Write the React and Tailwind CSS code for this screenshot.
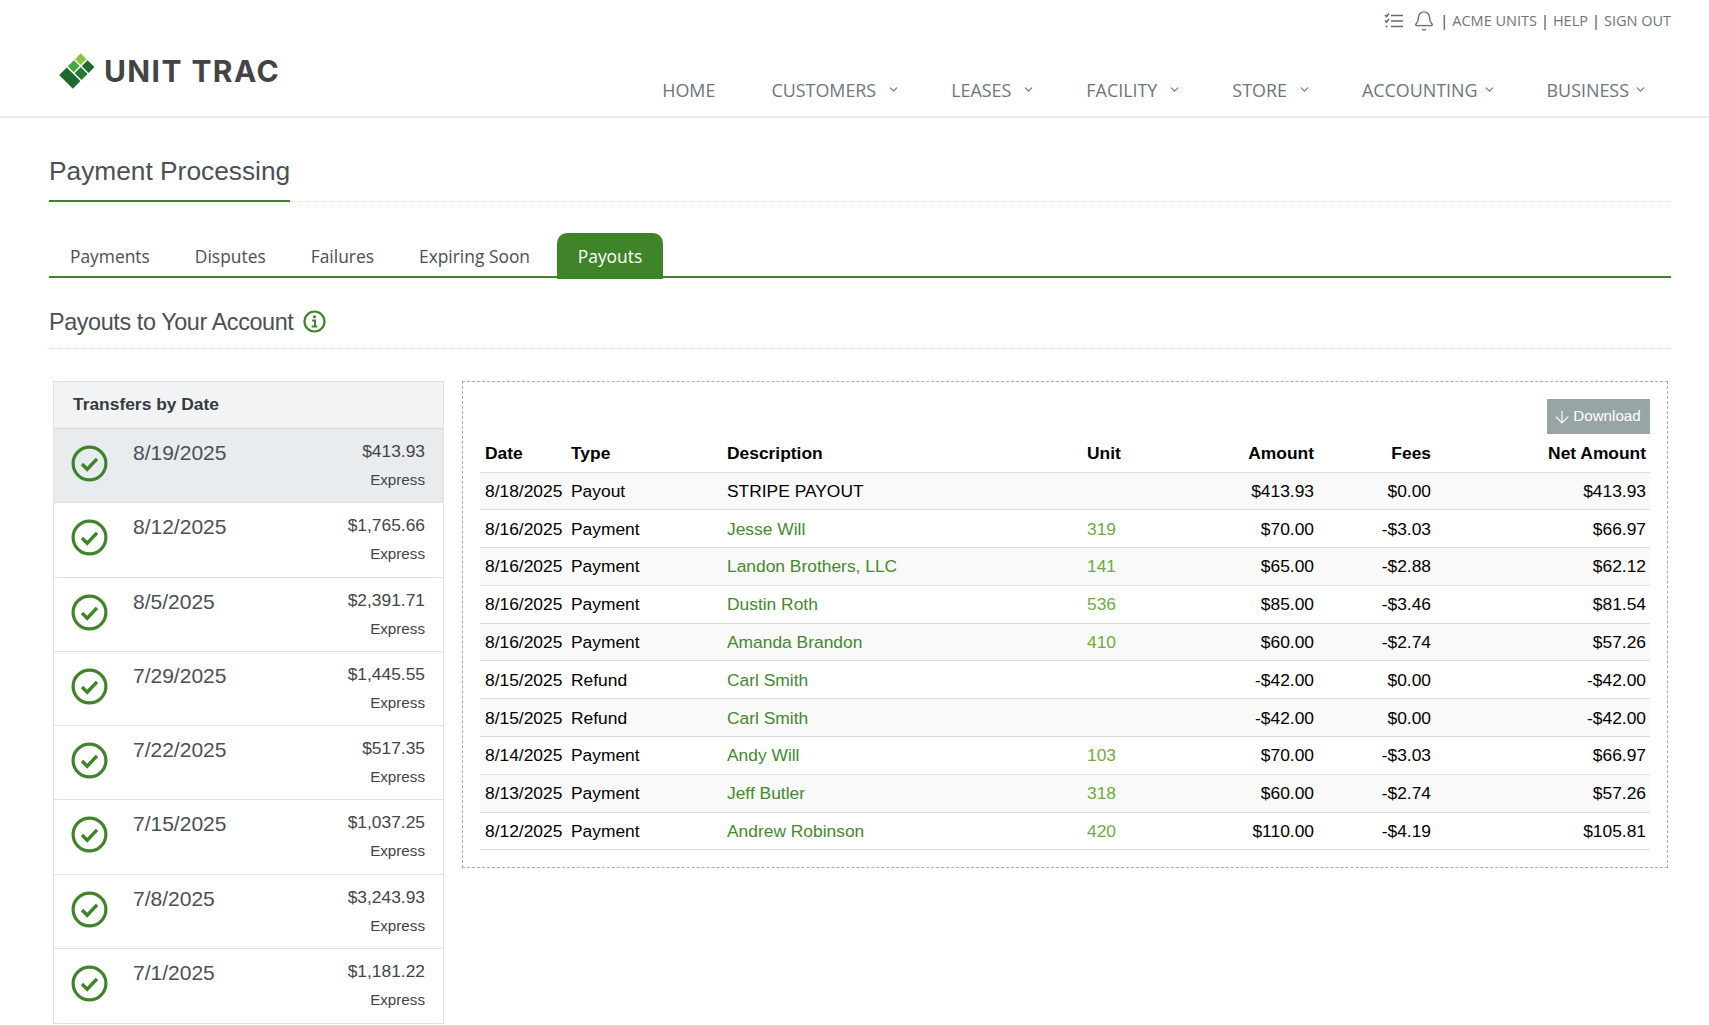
import React from 'react';
import { Bell, ChevronDown, ArrowDown } from 'lucide-react';

const navItems = [
  { label: 'HOME', className: 'ml-0' },
  { label: 'CUSTOMERS', className: 'ml-[56px]', caret: 'ml-[11px]' },
  { label: 'LEASES', className: 'ml-[51px]', caret: 'ml-[11px]' },
  { label: 'FACILITY', className: 'ml-[51px]', caret: 'ml-[11px]' },
  { label: 'STORE', className: 'ml-[51px]', caret: 'ml-[11px]' },
  { label: 'ACCOUNTING', className: 'ml-[51px]', caret: 'ml-[5px]' },
  { label: 'BUSINESS', className: 'ml-[51px]', caret: 'ml-[5px]' },
];

const tabs = ['Payments', 'Disputes', 'Failures', 'Expiring Soon'];

const transfers = [
  { date: '8/19/2025', amount: '$413.93', active: true },
  { date: '8/12/2025', amount: '$1,765.66' },
  { date: '8/5/2025', amount: '$2,391.71' },
  { date: '7/29/2025', amount: '$1,445.55' },
  { date: '7/22/2025', amount: '$517.35' },
  { date: '7/15/2025', amount: '$1,037.25' },
  { date: '7/8/2025', amount: '$3,243.93' },
  { date: '7/1/2025', amount: '$1,181.22' },
];

const rows = [
  ['8/18/2025', 'Payout', 'STRIPE PAYOUT', '', '$413.93', '$0.00', '$413.93'],
  ['8/16/2025', 'Payment', 'Jesse Will', '319', '$70.00', '-$3.03', '$66.97'],
  ['8/16/2025', 'Payment', 'Landon Brothers, LLC', '141', '$65.00', '-$2.88', '$62.12'],
  ['8/16/2025', 'Payment', 'Dustin Roth', '536', '$85.00', '-$3.46', '$81.54'],
  ['8/16/2025', 'Payment', 'Amanda Brandon', '410', '$60.00', '-$2.74', '$57.26'],
  ['8/15/2025', 'Refund', 'Carl Smith', '', '-$42.00', '$0.00', '-$42.00'],
  ['8/15/2025', 'Refund', 'Carl Smith', '', '-$42.00', '$0.00', '-$42.00'],
  ['8/14/2025', 'Payment', 'Andy Will', '103', '$70.00', '-$3.03', '$66.97'],
  ['8/13/2025', 'Payment', 'Jeff Butler', '318', '$60.00', '-$2.74', '$57.26'],
  ['8/12/2025', 'Payment', 'Andrew Robinson', '420', '$110.00', '-$4.19', '$105.81'],
];

const Logo = () => (
  <svg width="36" height="36" viewBox="0 0 104 105" className="shrink-0">
    <polygon points="63,1 80,18 63,35 46,18" fill="#8cc63f" />
    <polygon points="43,21 60,38 42,56 25,39" fill="#4fa445" />
    <polygon points="83,21 103,41 86,58 66,38" fill="#1e6b32" />
    <polygon points="63,41 83,61 65,79 45,59" fill="#2a7a35" />
    <polygon points="22,42 62,82 40,104 0,64" fill="#1d6a2e" />
  </svg>
);

const CheckCircle = () => (
  <svg width="37" height="37" viewBox="0 0 37 37" fill="none" className="shrink-0">
    <circle cx="18.5" cy="18.5" r="16.4" stroke="#3f8428" strokeWidth="3.2" />
    <path d="M11 19l5.2 5.2 9.8-10.4" stroke="#3f8428" strokeWidth="3.4" />
  </svg>
);

const TaskList = () => (
  <svg width="20" height="18" viewBox="0 0 20 18" fill="none" stroke="#5f6a72" strokeWidth="1.6">
    <path d="M1 3l1.5 1.5L5 1.5M1 8.5L2.5 10 5 7" />
    <path d="M7 3.5h12M7 9h12M7 14.5h12" />
    <circle cx="2.5" cy="14.5" r="1" fill="#5f6a72" stroke="none" />
  </svg>
);

const InfoIcon = () => (
  <svg width="23" height="23" viewBox="0 0 23 23" fill="none" stroke="#3f8428">
    <circle cx="11.5" cy="11.5" r="10" strokeWidth="2.2" />
    <path d="M9 10.4h3v5.8M8.6 16.4h5.8" strokeWidth="2" />
    <circle cx="11.4" cy="6.8" r="1.5" fill="#3f8428" stroke="none" />
  </svg>
);

export default function App() {
  return (
    <div className="min-h-[1025px] bg-white font-['Liberation_Sans',Arial,sans-serif] overflow-hidden">
      {/* Header */}
      <header className="h-[118px] border-b-2 border-[#ececec] pl-[59px] pr-[38px]">
        <div className="flex items-center justify-end h-[42px] text-[14.5px] text-[#6c757d] font-['Open_Sans',sans-serif]">
          <TaskList />
          <Bell className="w-[22px] h-[22px] ml-[9px] text-[#5f6a72]" strokeWidth={1.5} />
          <span className="ml-[5px] text-[#343a40]">|</span>
          <span className="ml-[4px]">ACME UNITS</span>
          <span className="ml-[4px] text-[#343a40]">|</span>
          <span className="ml-[4px]">HELP</span>
          <span className="ml-[4px] text-[#343a40]">|</span>
          <span className="ml-[4px]">SIGN OUT</span>
        </div>
        <div className="flex">
          <div className="flex items-center gap-[9px] mt-[11px] h-[36px]">
            <Logo />
            <span className="font-['Inter',sans-serif] font-bold text-[30px] text-[#444444] tracking-[1.4px] leading-none">UNIT TRAC</span>
          </div>
          <nav className="flex-1 flex justify-end items-center pr-[24px] mt-[33px] h-[30px] text-[17.9px] text-[#6c757d] font-['Open_Sans',sans-serif]">
            {navItems.map((item) => (
              <div key={item.label} className={`flex items-center ${item.className}`}>
                <span>{item.label}</span>
                {item.caret && <ChevronDown className={`w-[13px] h-[13px] ${item.caret}`} strokeWidth={2} />}
              </div>
            ))}
          </nav>
        </div>
      </header>

      <main className="pl-[49px] pr-[38px]">
        {/* Page title */}
        <div className="h-[84px] border-b border-dotted border-[#dddddd] flex">
          <h1 className="h-[84px] pt-[36px] text-[26.3px] leading-[34px] text-[#495057] border-b-2 border-[#3f8428]">Payment Processing</h1>
        </div>

        {/* Tabs */}
        <div className="flex h-[77px] items-end border-b-2 border-[#3f8428] mt-[-1px] font-['Open_Sans',sans-serif] text-[17.4px] text-[#495057]">
          <div className="flex h-[46px] mb-[-3px] pl-[21px]">
            {tabs.map((t) => (
              <span key={t} className="pr-[45px] pt-[10px]">{t}</span>
            ))}
            <span className="ml-[-18px] w-[106px] rounded-t-[10px] bg-[#3f8428] text-white text-center pt-[10px]">Payouts</span>
          </div>
        </div>

        {/* Section heading */}
        <div className="flex items-center h-[71px] ml-[-3px] pl-[3px] pt-[20px] border-b border-dotted border-[#dddddd] text-[23.4px] text-[#495057] tracking-[-0.4px]">
          <span>Payouts to Your Account</span>
          <span className="ml-[10px] mb-[4px]"><InfoIcon /></span>
        </div>

        <div className="flex items-start mt-[32px] pl-[4px] pr-[3px]">
          {/* Transfers */}
          <div className="w-[391px] border border-[#dee2e6] shrink-0">
            <div className="h-[47px] bg-[#f1f3f5] border-b border-[#d5d8dd] pl-[19px] pb-[2px] flex items-center font-bold text-[17.4px] text-[#343a40]">Transfers by Date</div>
            {transfers.map((t) => (
              <div key={t.date} className={`flex h-[74.3px] border-b border-[#dee2e6] last:border-b-0 pl-[17px] pr-[18px] ${t.active ? 'bg-[#e9ecef]' : ''}`}>
                <div className="pt-[16px]"><CheckCircle /></div>
                <div className="ml-[25px] pt-[11px] text-[21px] leading-[26px] text-[#495057] flex-1">{t.date}</div>
                <div className="text-right pt-[10px]">
                  <div className="text-[17.4px] leading-[24px] text-[#444444]">{t.amount}</div>
                  <div className="mt-[6px] text-[15.2px] leading-[22px] text-[#444444]">Express</div>
                </div>
              </div>
            ))}
          </div>

          {/* Payout details */}
          <div className="ml-[18px] flex-1 border border-dashed border-[#aaaaaa] px-[17px] pt-[17px] pb-[17px]">
            <div className="flex justify-end mb-[1px]">
              <button className="flex items-center justify-center w-[103px] h-[35px] bg-[#98a5a5] text-white text-[15.2px]">
                <ArrowDown className="w-[20px] h-[20px] mr-[1px] ml-[-4px]" strokeWidth={1.3} />
                Download
              </button>
            </div>
            <table className="w-full table-fixed border-collapse text-[17.4px] text-black">
              <colgroup>
                <col className="w-[86px]" />
                <col className="w-[156px]" />
                <col className="w-[360px]" />
                <col className="w-[100px]" />
                <col className="w-[136px]" />
                <col className="w-[117px]" />
                <col />
              </colgroup>
              <thead>
                <tr className="h-[37px] border-b border-[#dddddd]">
                  <th className="text-left font-bold pl-[5px]">Date</th>
                  <th className="text-left font-bold pl-[5px]">Type</th>
                  <th className="text-left font-bold pl-[5px]">Description</th>
                  <th className="text-left font-bold pl-[5px]">Unit</th>
                  <th className="text-right font-bold pr-[4px]">Amount</th>
                  <th className="text-right font-bold pr-[4px]">Fees</th>
                  <th className="text-right font-bold pr-[4px]">Net Amount</th>
                </tr>
              </thead>
              <tbody>
                {rows.map((r, i) => (
                  <tr key={i} className={`h-[37.8px] border-b border-[#dddddd] ${i % 2 === 0 ? 'bg-[#f9f9f9]' : ''}`}>
                    <td className="pl-[5px]">{r[0]}</td>
                    <td className="pl-[5px]">{r[1]}</td>
                    <td className={`pl-[5px] ${r[2] === 'STRIPE PAYOUT' ? '' : 'text-[#438a2c]'}`}>{r[2]}</td>
                    <td className="pl-[5px] text-[#6fab3d]">{r[3]}</td>
                    <td className="text-right pr-[4px]">{r[4]}</td>
                    <td className="text-right pr-[4px]">{r[5]}</td>
                    <td className="text-right pr-[4px]">{r[6]}</td>
                  </tr>
                ))}
              </tbody>
            </table>
          </div>
        </div>
      </main>
    </div>
  );
}
